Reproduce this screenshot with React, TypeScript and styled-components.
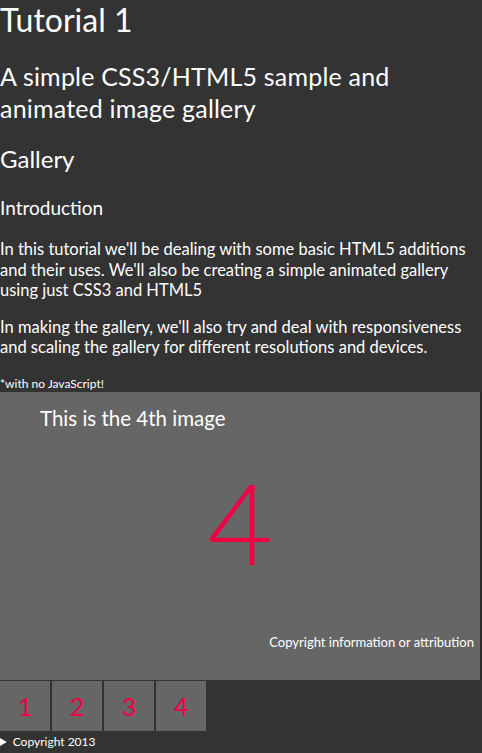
import styled, { createGlobalStyle } from "styled-components";

const GlobalStyle = createGlobalStyle`
  body {
    margin: 0;
    background: #333333;
    color: #ffffff;
    font-family: "Lato", "Open Sans", sans-serif;
  }
`;

const Page = styled.main`
  display: flex;
  flex-direction: column;
`;

const Title = styled.h1`
  margin: 0;
  font-size: 32px;
  font-weight: 400;
  line-height: 39px;
`;

const Subtitle = styled.h2`
  margin: 21px 0 0;
  font-size: 25px;
  font-weight: 400;
  line-height: 32px;
  letter-spacing: 0.2px;
`;

const SectionTitle = styled.h3`
  margin: 20px 0 0;
  font-size: 24px;
  font-weight: 400;
  line-height: 30px;
`;

const SubHeading = styled.h4`
  margin: 22px 0 0;
  font-size: 19px;
  font-weight: 400;
  line-height: 24px;
`;

const Para = styled.p`
  width: 480px;
  margin: 19px 0 0;
  font-size: 16.5px;
  line-height: 20.5px;

  & + & {
    margin-top: 16px;
  }
`;

const Note = styled.small`
  display: block;
  margin-top: 19px;
  font-size: 12px;
  line-height: 14px;
`;

const Stage = styled.figure`
  margin: 1px 0 0;
  width: 482px;
  height: 288px;
  background: #666666;
  border-right: 2px solid #2b2b2b;
  box-sizing: border-box;
  display: flex;
  flex-direction: column;
`;

const Caption = styled.figcaption`
  padding: 14px 0 0 40px;
  font-size: 20.5px;
  font-weight: 400;
  line-height: 24px;
`;

const BigNumber = styled.div`
  flex: 1;
  display: flex;
  align-items: center;
  justify-content: center;
  padding-bottom: 20px;
  color: #f00044;
  font-size: 112px;
  font-weight: 300;
  line-height: 1;
`;

const Attribution = styled.div`
  padding: 0 6px 30px 0;
  text-align: right;
  font-size: 13px;
  line-height: 16px;
`;

const Thumbs = styled.nav`
  display: flex;
  gap: 2px;
  margin-top: 1px;
`;

const Thumb = styled.a`
  width: 50px;
  height: 50px;
  background: #666666;
  color: #f00044;
  font-size: 25px;
  font-weight: 400;
  display: flex;
  align-items: center;
  justify-content: center;
  text-decoration: none;
`;

const Footer = styled.details`
  font-size: 12px;
  line-height: 22px;

  summary {
    cursor: pointer;
  }
`;

const App = () => {
  return (
    <Page>
      <GlobalStyle />
      <Title>Tutorial 1</Title>
      <Subtitle>
        A simple CSS3/HTML5 sample and
        <br />
        animated image gallery
      </Subtitle>
      <SectionTitle>Gallery</SectionTitle>
      <SubHeading>Introduction</SubHeading>
      <Para>
        In this tutorial we'll be dealing with some basic HTML5 additions and
        their uses. We'll also be creating a simple animated gallery using just
        CSS3 and HTML5
      </Para>
      <Para>
        In making the gallery, we'll also try and deal with responsiveness and
        scaling the gallery for different resolutions and devices.
      </Para>
      <Note>*with no JavaScript!</Note>
      <Stage>
        <Caption>This is the 4th image</Caption>
        <BigNumber>4</BigNumber>
        <Attribution>Copyright information or attribution</Attribution>
      </Stage>
      <Thumbs>
        {[1, 2, 3, 4].map((n) => (
          <Thumb key={n} href={`#image-${n}`}>
            {n}
          </Thumb>
        ))}
      </Thumbs>
      <Footer>
        <summary>Copyright 2013</summary>
      </Footer>
    </Page>
  );
};

export default App;
